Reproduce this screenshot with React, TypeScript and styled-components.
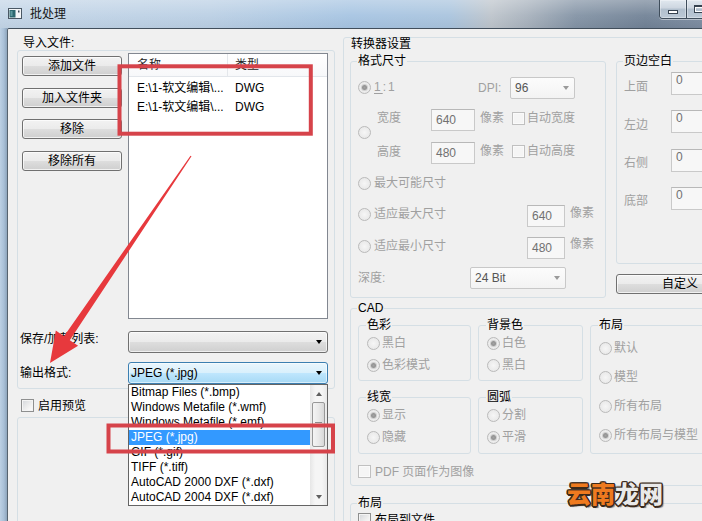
import React from "react";
import styled, { createGlobalStyle, css } from "styled-components";

const UI_FONT = `"Liberation Sans", "Noto Sans CJK SC", sans-serif`;
const GREY_TEXT = "#a0a0a0";
const GROUP_LINE = "#d5dfe5";

const GlobalStyle = createGlobalStyle`
  html, body { margin: 0; padding: 0; background: #f0f0f0; }
  body { font-family: ${UI_FONT}; font-size: 12px; }
  *, *::before, *::after { box-sizing: border-box; }
`;

/* ---------- window chrome ---------- */

const Window = styled.div`
  position: relative;
  width: 702px;
  height: 521px;
  overflow: hidden;
  display: flex;
  flex-direction: column;
  font-family: ${UI_FONT};
  font-size: 12px;
  line-height: 14px;
  color: #000;
  background: #b3c8de;
`;

const TitleBar = styled.div`
  flex: none;
  height: 28px;
  display: flex;
  align-items: flex-start;
  background:
    linear-gradient(180deg, rgba(255, 255, 255, 0.3) 0%, rgba(255, 255, 255, 0.06) 55%, rgba(0, 0, 0, 0.03) 100%),
    linear-gradient(90deg, #c3d5e7 0%, #bacfe4 30%, #a6c4e2 50%, #a9c4de 64%, #bdc4cb 70%, #a8b2bd 75%, #8393a5 82%, #718296 92%, #7b8ba0 100%);
`;

const AppIcon = styled.svg`
  flex: none;
  margin: 8px 0 0 8px;
`;

const TitleText = styled.div`
  flex: 1;
  margin: 7px 0 0 8px;
  line-height: 14px;
  color: #161616;
`;

const CaptionGroup = styled.div`
  flex: none;
  display: flex;
  margin-right: -56px;
  border: 1px solid #3f4d5b;
  border-top: none;
  border-radius: 0 0 4px 4px;
  overflow: hidden;
  box-shadow: 0 1px 0 rgba(255, 255, 255, 0.45);
`;

const CaptionButton = styled.div<{ $w: number }>`
  width: ${(p) => p.$w}px;
  height: 18px;
  display: flex;
  align-items: center;
  justify-content: center;
  background: linear-gradient(180deg, #e1e8ef 0%, #cdd6e0 45%, #b1bfcd 50%, #bcc9d6 100%);
  box-shadow: inset 0 0 0 1px rgba(255, 255, 255, 0.35);
  & + & {
    border-left: 1px solid #3f4d5b;
  }
`;

const MinGlyph = styled.span`
  width: 10px;
  height: 4px;
  margin-top: 5px;
  background: #fff;
  border: 1px solid #36424f;
`;

const MaxGlyph = styled.span`
  width: 10px;
  height: 8px;
  border: 1px solid #36424f;
  border-top-width: 2px;
  box-shadow: inset 0 0 0 1px #fff;
`;

const Body = styled.div`
  flex: 1;
  min-height: 0;
  display: flex;
`;

const FrameEdge = styled.div`
  flex: none;
  width: 7px;
  background: linear-gradient(90deg, #bcd0e4 0%, #a9c0d7 55%, #8ea5bc 100%);
`;

const Client = styled.div`
  flex: 1;
  min-width: 0;
  display: flex;
  align-items: flex-start;
  background: #f0f0f0;
  border-top: 1px solid #414e5b;
  border-left: 1px solid #56636f;
  border-top-left-radius: 2px;
  padding: 8px 0 0 9px;
`;

/* ---------- common controls ---------- */

const PushButton = styled.button<{ $w?: number }>`
  width: ${(p) => (p.$w ? `${p.$w}px` : "100%")};
  height: 20px;
  flex: none;
  padding: 0;
  font: inherit;
  line-height: 14px;
  color: #000;
  border: 1px solid #707070;
  border-radius: 3px;
  background: linear-gradient(180deg, #f2f2f2 0%, #ebebeb 48%, #dddddd 52%, #cfcfcf 100%);
  box-shadow: inset 0 0 0 1px rgba(255, 255, 255, 0.7);
`;

const selectTones = {
  button: css`
    border: 1px solid #707070;
    border-radius: 3px;
    background: linear-gradient(180deg, #f2f2f2 0%, #ebebeb 48%, #dddddd 52%, #cfcfcf 100%);
    box-shadow: inset 0 0 0 1px rgba(255, 255, 255, 0.65);
    color: #000;
  `,
  focus: css`
    border: 1px solid #3c7fb1;
    border-radius: 3px;
    background: linear-gradient(180deg, #eaf6fd 0%, #d9f0fc 48%, #bee6fd 52%, #a7d9f5 100%);
    box-shadow: inset 0 0 0 1px rgba(255, 255, 255, 0.55);
    color: #000;
  `,
  disabled: css`
    border: 1px solid #c8c8c8;
    border-radius: 2px;
    background: linear-gradient(180deg, #fcfcfc 0%, #f3f3f3 100%);
    color: #555;
  `,
};

type Tone = keyof typeof selectTones;

const SelectBox = styled.div<{ $w?: number; $tone: Tone }>`
  width: ${(p) => (p.$w ? `${p.$w}px` : "100%")};
  height: 22px;
  flex: none;
  display: flex;
  align-items: center;
  justify-content: space-between;
  padding: 0 5px 0 ${(p) => (p.$tone === "disabled" ? 4 : 2)}px;
  white-space: nowrap;
  ${(p) => selectTones[p.$tone]}
`;

const DropArrow = styled.span<{ $muted?: boolean }>`
  flex: none;
  width: 0;
  height: 0;
  border-left: 3.5px solid transparent;
  border-right: 3.5px solid transparent;
  border-top: 4px solid ${(p) => (p.$muted ? "#9a9a9a" : "#000")};
`;

const Field = styled.div<{ $w: number; $h?: number; $top?: boolean }>`
  width: ${(p) => p.$w}px;
  height: ${(p) => p.$h ?? 22}px;
  flex: none;
  display: flex;
  align-items: ${(p) => (p.$top ? "flex-start" : "center")};
  padding-left: 4px;
  border: 1px solid #c9c9c9;
  border-top-color: #b8b8b8;
  background: #f7f7f7;
  color: #717171;
`;

const RadioDot = styled.span<{ $checked?: boolean }>`
  flex: none;
  width: 13px;
  height: 13px;
  border-radius: 50%;
  border: 1px solid #bababa;
  background: radial-gradient(circle at 50% 50%, #f6f6f6 0%, #e4e4e4 100%);
  display: flex;
  align-items: center;
  justify-content: center;
  &::after {
    content: "";
    width: 5px;
    height: 5px;
    border-radius: 50%;
    background: ${(p) => (p.$checked ? "radial-gradient(circle, #a3a3a3, #858585)" : "transparent")};
    box-shadow: ${(p) => (p.$checked ? "0 0 0 1px #cfcfcf" : "none")};
  }
`;

const CheckBox = styled.span<{ $disabled?: boolean }>`
  flex: none;
  width: 13px;
  height: 13px;
  border: 1px solid ${(p) => (p.$disabled ? "#c0c0c0" : "#8e8f8f")};
  background: ${(p) =>
    p.$disabled ? "#f5f5f5" : "linear-gradient(135deg, #d3d6da 0%, #eeeeee 55%, #ffffff 100%)"};
  box-shadow: inset 0 0 0 1px ${(p) => (p.$disabled ? "#fafafa" : "#f4f4f4")};
`;

const Choice = styled.div<{ $h?: number; $w?: number; $gap?: number; $lift?: number }>`
  flex: none;
  display: flex;
  align-items: center;
  gap: ${(p) => p.$gap ?? 3}px;
  height: ${(p) => (p.$h ? `${p.$h}px` : "auto")};
  width: ${(p) => (p.$w ? `${p.$w}px` : "auto")};
  padding-bottom: ${(p) => p.$lift ?? 0}px;
  color: ${GREY_TEXT};
  white-space: nowrap;
`;

const Caption = styled.span<{ $w?: number; $lift?: number; $drop?: number; $ml?: number }>`
  flex: none;
  width: ${(p) => (p.$w ? `${p.$w}px` : "auto")};
  margin-left: ${(p) => p.$ml ?? 0}px;
  padding-bottom: ${(p) => p.$lift ?? 0}px;
  padding-top: ${(p) => p.$drop ?? 0}px;
  color: ${GREY_TEXT};
  white-space: nowrap;
`;

const Group = styled.fieldset<{ $w?: number; $h: number }>`
  margin: 0;
  padding: 0;
  min-width: 0;
  width: ${(p) => (p.$w ? `${p.$w}px` : "auto")};
  height: ${(p) => p.$h}px;
  flex: none;
  border: 1px solid ${GROUP_LINE};
  border-radius: 3px;
`;

const Legend = styled.legend<{ $ml?: number }>`
  padding: 0 1px;
  margin-left: ${(p) => p.$ml ?? 6}px;
  height: 14px;
  line-height: 14px;
  color: #000;
`;

/* ---------- left panel ---------- */

const LeftPanel = styled.div`
  flex: none;
  width: 318px;
  display: flex;
  flex-direction: column;
`;

const PanelTitle = styled.div<{ $ml?: number }>`
  height: 13px;
  line-height: 13px;
  padding-left: ${(p) => p.$ml ?? 6}px;
`;

const ImportFrame = styled.div`
  height: 339px;
  border: 1px solid ${GROUP_LINE};
  border-radius: 3px;
  padding: 2px 6px 0 4px;
  display: grid;
  grid-template-columns: 100px 200px;
  grid-template-rows: 266px auto auto;
  column-gap: 6px;
  align-content: start;
`;

const ButtonStack = styled.div`
  display: flex;
  flex-direction: column;
  gap: 11.5px;
  padding-top: 3px;
`;

const ListView = styled.div`
  border: 1px solid #828790;
  background: #fff;
  display: flex;
  flex-direction: column;
`;

const ListColumns = styled.div`
  display: grid;
  grid-template-columns: 99px 1fr;
`;

const ListHeader = styled(ListColumns)`
  height: 23px;
  border-bottom: 1px solid #e2e6eb;
  background: linear-gradient(180deg, #ffffff 0%, #f7f8fa 100%);
  color: #262626;
`;

const HeaderCell = styled.div<{ $divider?: boolean }>`
  line-height: 22px;
  padding-left: ${(p) => (p.$divider ? 8 : 7)}px;
  border-right: ${(p) => (p.$divider ? "1px solid #e4e7eb" : "none")};
`;

const ListBody = styled.div`
  padding-top: 2px;
`;

const ListRow = styled(ListColumns)`
  height: 19px;
  line-height: 19px;
`;

const ListCell = styled.div<{ $first?: boolean }>`
  padding-left: ${(p) => (p.$first ? 8 : 7)}px;
  white-space: nowrap;
  overflow: hidden;
`;

const FormLabel = styled.div<{ $lift?: number; $mt: number }>`
  margin: ${(p) => p.$mt}px 0 0 -2px;
  height: 22px;
  display: flex;
  align-items: center;
  padding-bottom: ${(p) => p.$lift ?? 0}px;
  white-space: nowrap;
`;

const ComboSlot = styled.div<{ $mt: number }>`
  position: relative;
  margin-top: ${(p) => p.$mt}px;
`;

const Popup = styled.div`
  position: absolute;
  top: 100%;
  left: 0;
  z-index: 3;
  width: 200px;
  height: 122px;
  display: flex;
  background: #fff;
  border: 1px solid #646464;
`;

const PopupList = styled.ul`
  flex: 1;
  margin: 0;
  padding: 0;
  list-style: none;
`;

const PopupItem = styled.li<{ $selected?: boolean }>`
  height: 15px;
  line-height: 15px;
  padding-left: 2px;
  white-space: nowrap;
  overflow: hidden;
  background: ${(p) => (p.$selected ? "#3399ff" : "transparent")};
  color: ${(p) => (p.$selected ? "#fff" : "#000")};
`;

const ScrollTrack = styled.div`
  width: 17px;
  flex: none;
  display: flex;
  flex-direction: column;
  align-items: center;
  background: linear-gradient(90deg, #e6e6e6 0%, #f5f5f5 30%, #f5f5f5 70%, #e8e8e8 100%);
`;

const ScrollArrow = styled.div<{ $dir: "up" | "down" }>`
  width: 17px;
  height: 17px;
  flex: none;
  display: flex;
  align-items: center;
  justify-content: center;
  margin-top: ${(p) => (p.$dir === "down" ? "auto" : "0")};
  &::before {
    content: "";
    border-left: 3.5px solid transparent;
    border-right: 3.5px solid transparent;
    ${(p) => (p.$dir === "up" ? "border-bottom: 4px solid #5f5f5f;" : "border-top: 4px solid #5f5f5f;")}
  }
`;

const ScrollThumb = styled.div`
  width: 13px;
  height: 45px;
  flex: none;
  display: flex;
  align-items: center;
  justify-content: center;
  border: 1px solid #989898;
  border-radius: 2px;
  background: linear-gradient(90deg, #f4f4f4 0%, #e9e9e9 50%, #d8d8d8 100%);
`;

const Grip = styled.span`
  width: 7px;
  height: 5px;
  background: repeating-linear-gradient(180deg, #8c8c8c 0 1px, transparent 1px 2px);
`;

const PreviewToggle = styled.div`
  margin: 10px 0 0 4px;
  height: 13px;
  display: flex;
  align-items: center;
  gap: 4px;
`;

const PreviewFrame = styled.div`
  margin-top: 5px;
  height: 130px;
  border: 1px solid ${GROUP_LINE};
  border-radius: 3px;
`;

/* ---------- converter settings ---------- */

const ConverterGroup = styled.div`
  flex: none;
  width: 420px;
  height: 510px;
  margin-left: 8px;
  padding-left: 6px;
  border: 1px solid ${GROUP_LINE};
  border-radius: 3px;
  display: flex;
  flex-direction: column;
`;

const TopRow = styled.div`
  display: flex;
  align-items: flex-start;
  gap: 10px;
  margin-top: 3px;
`;

const GroupBody = styled.div<{ $pl: number; $pt?: number; $gap?: number }>`
  display: flex;
  flex-direction: column;
  padding: ${(p) => p.$pt ?? 0}px 0 0 ${(p) => p.$pl}px;
  gap: ${(p) => p.$gap ?? 0}px;
`;

const Line = styled.div<{ $mt?: number }>`
  display: flex;
  align-items: center;
  height: 22px;
  margin-top: ${(p) => p.$mt ?? 0}px;
`;

const OneToOne = styled.span`
  letter-spacing: 2px;
  & u {
    text-underline-offset: 2px;
  }
`;

const SizeBlock = styled.div`
  display: flex;
  margin-top: 10px;
`;

const SizeRadioSlot = styled.div`
  width: 19px;
  flex: none;
  display: flex;
  align-items: center;
  padding-bottom: 8px;
`;

const SizeLines = styled.div`
  display: flex;
  flex-direction: column;
  gap: 11px;
`;

const MarginColumn = styled.div`
  display: flex;
  flex-direction: column;
  gap: 10px;
`;

const MarginRow = styled.div`
  display: flex;
  align-items: center;
  height: 23px;
`;

const CadBody = styled.div`
  padding: 3px 0 0 7px;
  display: flex;
  flex-direction: column;
`;

const CadGrid = styled.div`
  display: grid;
  grid-template-columns: 113px 105px 122px;
  grid-template-rows: 63px 64px;
  column-gap: 7px;
  row-gap: 9px;
`;

const SubGroup = styled.fieldset<{ $tall?: boolean }>`
  margin: 0;
  padding: 0;
  min-width: 0;
  border: 1px solid ${GROUP_LINE};
  border-radius: 3px;
  ${(p) =>
    p.$tall &&
    css`
      grid-column: 3;
      grid-row: 1 / span 2;
    `}
`;

const CheckLine = styled.div<{ $mt: number; $muted?: boolean }>`
  display: flex;
  align-items: center;
  gap: 4px;
  height: 13px;
  margin-top: ${(p) => p.$mt}px;
  color: ${(p) => (p.$muted ? GREY_TEXT : "#000")};
  white-space: nowrap;
`;

const SpacedGroup = styled(Group)`
  margin-top: 10px;
`;

const CadGroup = styled(Group)`
  margin-top: 3px;
`;

/* ---------- overlays (annotations on the screenshot) ---------- */

const Annotations = styled.svg`
  position: absolute;
  left: 0;
  top: 0;
  z-index: 5;
  pointer-events: none;
`;

const Watermark = styled.div`
  position: absolute;
  left: 567px;
  top: 481px;
  z-index: 6;
  pointer-events: none;
  font-family: "Noto Sans CJK SC", sans-serif;
  font-weight: 900;
  font-size: 24px;
  line-height: 24px;
  white-space: nowrap;
  text-shadow:
    1.5px 0 0 #3a2a1c, -1.5px 0 0 #3a2a1c, 0 1.5px 0 #3a2a1c, 0 -1.5px 0 #3a2a1c,
    1px 1px 0 #3a2a1c, -1px -1px 0 #3a2a1c, 1px -1px 0 #3a2a1c, -1px 1px 0 #3a2a1c,
    2px 2px 1px rgba(0, 0, 0, 0.5);
`;

const WatermarkPart = styled.span<{ $tone: "orange" | "silver" }>`
  color: ${(p) => (p.$tone === "orange" ? "#ef7a1f" : "#e9e9e9")};
`;

const formats = [
  "Bitmap Files (*.bmp)",
  "Windows Metafile (*.wmf)",
  "Windows Metafile (*.emf)",
  "JPEG (*.jpg)",
  "GIF (*.gif)",
  "TIFF (*.tiff)",
  "AutoCAD 2000 DXF (*.dxf)",
  "AutoCAD 2004 DXF (*.dxf)",
];

const files = ["E:\\1-软文编辑\\...", "E:\\1-软文编辑\\..."];

const marginRows = ["上面", "左边", "右侧", "底部"];

export default function App() {
  return (
    <>
      <GlobalStyle />
      <Window>
        <TitleBar>
          <AppIcon width="14" height="11" viewBox="0 0 14 11">
            <rect x="0.5" y="0.5" width="13" height="10" fill="#f4f6f8" stroke="#4a5865" />
            <rect x="1.5" y="2" width="6" height="7.5" fill="#2d6870" />
            <rect x="2.5" y="3" width="2" height="5" fill="#5e9aa0" />
            <rect x="10" y="2.5" width="1.5" height="2" fill="#3c4a58" />
          </AppIcon>
          <TitleText>批处理</TitleText>
          <CaptionGroup>
            <CaptionButton $w={26}>
              <MinGlyph />
            </CaptionButton>
            <CaptionButton $w={25}>
              <MaxGlyph />
            </CaptionButton>
            <CaptionButton $w={46} />
          </CaptionGroup>
        </TitleBar>

        <Body>
          <FrameEdge />
          <Client>
            <LeftPanel>
              <PanelTitle>导入文件:</PanelTitle>
              <ImportFrame>
                <ButtonStack>
                  <PushButton>添加文件</PushButton>
                  <PushButton>加入文件夹</PushButton>
                  <PushButton>移除</PushButton>
                  <PushButton>移除所有</PushButton>
                </ButtonStack>
                <ListView>
                  <ListHeader>
                    <HeaderCell $divider>名称</HeaderCell>
                    <HeaderCell>类型</HeaderCell>
                  </ListHeader>
                  <ListBody>
                    {files.map((f, i) => (
                      <ListRow key={i}>
                        <ListCell $first>{f}</ListCell>
                        <ListCell>DWG</ListCell>
                      </ListRow>
                    ))}
                  </ListBody>
                </ListView>

                <FormLabel $mt={12} $lift={6}>
                  保存/加载列表:
                </FormLabel>
                <ComboSlot $mt={12}>
                  <SelectBox $tone="button">
                    <span />
                    <DropArrow />
                  </SelectBox>
                </ComboSlot>

                <FormLabel $mt={9}>输出格式:</FormLabel>
                <ComboSlot $mt={9}>
                  <SelectBox $tone="focus">
                    <span>JPEG (*.jpg)</span>
                    <DropArrow />
                  </SelectBox>
                  <Popup>
                    <PopupList>
                      {formats.map((f) => (
                        <PopupItem key={f} $selected={f === "JPEG (*.jpg)"}>
                          {f}
                        </PopupItem>
                      ))}
                    </PopupList>
                    <ScrollTrack>
                      <ScrollArrow $dir="up" />
                      <ScrollThumb>
                        <Grip />
                      </ScrollThumb>
                      <ScrollArrow $dir="down" />
                    </ScrollTrack>
                  </Popup>
                </ComboSlot>
              </ImportFrame>

              <PreviewToggle>
                <CheckBox />
                <span>启用预览</span>
              </PreviewToggle>
              <PreviewFrame />
            </LeftPanel>

            <ConverterGroup>
              <PanelTitle $ml={1}>转换器设置</PanelTitle>
              <TopRow>
                <Group $w={256} $h={244}>
                  <Legend>格式尺寸</Legend>
                  <GroupBody $pl={7}>
                    <Line $mt={9}>
                      <Choice $w={120} $lift={2}>
                        <RadioDot $checked />
                        <OneToOne>
                          <u>1</u>:1
                        </OneToOne>
                      </Choice>
                      <Caption $w={32}>DPI:</Caption>
                      <SelectBox $w={65} $tone="disabled">
                        <span>96</span>
                        <DropArrow $muted />
                      </SelectBox>
                    </Line>

                    <SizeBlock>
                      <SizeRadioSlot>
                        <RadioDot />
                      </SizeRadioSlot>
                      <SizeLines>
                        <Line>
                          <Caption $w={54} $lift={4}>
                            宽度
                          </Caption>
                          <Field $w={44}>640</Field>
                          <Caption $w={32} $ml={5} $lift={5}>
                            像素
                          </Caption>
                          <Choice $lift={4} $gap={2}>
                            <CheckBox $disabled />
                            <span>自动宽度</span>
                          </Choice>
                        </Line>
                        <Line>
                          <Caption $w={54} $lift={2}>
                            高度
                          </Caption>
                          <Field $w={44}>480</Field>
                          <Caption $w={32} $ml={5} $lift={5}>
                            像素
                          </Caption>
                          <Choice $lift={4} $gap={2}>
                            <CheckBox $disabled />
                            <span>自动高度</span>
                          </Choice>
                        </Line>
                      </SizeLines>
                    </SizeBlock>

                    <Line $mt={8}>
                      <Choice>
                        <RadioDot />
                        <span>最大可能尺寸</span>
                      </Choice>
                    </Line>

                    <Line $mt={11}>
                      <Choice $w={169} $lift={4}>
                        <RadioDot />
                        <span>适应最大尺寸</span>
                      </Choice>
                      <Field $w={38}>640</Field>
                      <Caption $ml={5} $lift={6}>
                        像素
                      </Caption>
                    </Line>

                    <Line $mt={10}>
                      <Choice $w={169} $lift={4}>
                        <RadioDot />
                        <span>适应最小尺寸</span>
                      </Choice>
                      <Field $w={38}>480</Field>
                      <Caption $ml={5} $lift={8}>
                        像素
                      </Caption>
                    </Line>

                    <Line $mt={8}>
                      <Caption $w={112}>深度:</Caption>
                      <SelectBox $w={96} $tone="disabled">
                        <span>24 Bit</span>
                        <DropArrow $muted />
                      </SelectBox>
                    </Line>
                  </GroupBody>
                </Group>

                <MarginColumn>
                  <Group $w={150} $h={210}>
                    <Legend>页边空白</Legend>
                    <GroupBody $pl={7} $pt={4} $gap={15.3}>
                      {marginRows.map((m) => (
                        <MarginRow key={m}>
                          <Caption $w={47} $drop={6}>
                            {m}
                          </Caption>
                          <Field $w={70} $h={23} $top>
                            0
                          </Field>
                        </MarginRow>
                      ))}
                    </GroupBody>
                  </Group>
                  <PushButton $w={128}>自定义</PushButton>
                </MarginColumn>
              </TopRow>

              <CadGroup $w={400} $h={185}>
                <Legend>CAD</Legend>
                <CadBody>
                  <CadGrid>
                    <SubGroup>
                      <Legend $ml={7}>色彩</Legend>
                      <GroupBody $pl={8}>
                        <Choice $h={22} $gap={2}>
                          <RadioDot />
                          <span>黑白</span>
                        </Choice>
                        <Choice $h={22} $gap={2}>
                          <RadioDot $checked />
                          <span>色彩模式</span>
                        </Choice>
                      </GroupBody>
                    </SubGroup>
                    <SubGroup>
                      <Legend $ml={7}>背景色</Legend>
                      <GroupBody $pl={8}>
                        <Choice $h={22} $gap={2}>
                          <RadioDot $checked />
                          <span>白色</span>
                        </Choice>
                        <Choice $h={22} $gap={2}>
                          <RadioDot />
                          <span>黑白</span>
                        </Choice>
                      </GroupBody>
                    </SubGroup>
                    <SubGroup $tall>
                      <Legend $ml={7}>布局</Legend>
                      <GroupBody $pl={8} $pt={1.5}>
                        <Choice $h={29} $gap={2}>
                          <RadioDot />
                          <span>默认</span>
                        </Choice>
                        <Choice $h={29} $gap={2}>
                          <RadioDot />
                          <span>模型</span>
                        </Choice>
                        <Choice $h={29} $gap={2}>
                          <RadioDot />
                          <span>所有布局</span>
                        </Choice>
                        <Choice $h={29} $gap={2}>
                          <RadioDot $checked />
                          <span>所有布局与模型</span>
                        </Choice>
                      </GroupBody>
                    </SubGroup>
                    <SubGroup>
                      <Legend $ml={7}>线宽</Legend>
                      <GroupBody $pl={8}>
                        <Choice $h={22} $gap={2}>
                          <RadioDot $checked />
                          <span>显示</span>
                        </Choice>
                        <Choice $h={22} $gap={2}>
                          <RadioDot />
                          <span>隐藏</span>
                        </Choice>
                      </GroupBody>
                    </SubGroup>
                    <SubGroup>
                      <Legend $ml={7}>圆弧</Legend>
                      <GroupBody $pl={8}>
                        <Choice $h={22} $gap={2}>
                          <RadioDot />
                          <span>分割</span>
                        </Choice>
                        <Choice $h={22} $gap={2}>
                          <RadioDot $checked />
                          <span>平滑</span>
                        </Choice>
                      </GroupBody>
                    </SubGroup>
                  </CadGrid>
                  <CheckLine $mt={11} $muted>
                    <CheckBox $disabled />
                    <span>PDF 页面作为图像</span>
                  </CheckLine>
                </CadBody>
              </CadGroup>

              <SpacedGroup $w={400} $h={60}>
                <Legend>布局</Legend>
                <GroupBody $pl={7} $pt={3}>
                  <CheckLine $mt={0}>
                    <CheckBox />
                    <span>布局到文件</span>
                  </CheckLine>
                </GroupBody>
              </SpacedGroup>
            </ConverterGroup>
          </Client>
        </Body>

        <Annotations width="702" height="521" viewBox="0 0 702 521">
          <rect x="119.5" y="66.3" width="191.3" height="67.4" fill="none" stroke="#d6434a" strokeWidth="4" />
          <rect x="108.5" y="425.5" width="224.5" height="26" fill="none" stroke="#d6434a" strokeWidth="4" />
          <polygon
            points="191.5,156.3 69.8,340.2 78.1,345.8 50,363 55.8,330.6 64,336.2 190.5,155.7"
            fill="#e7393d"
          />
        </Annotations>

        <Watermark>
          <WatermarkPart $tone="orange">云南</WatermarkPart>
          <WatermarkPart $tone="silver">龙网</WatermarkPart>
        </Watermark>
      </Window>
    </>
  );
}
